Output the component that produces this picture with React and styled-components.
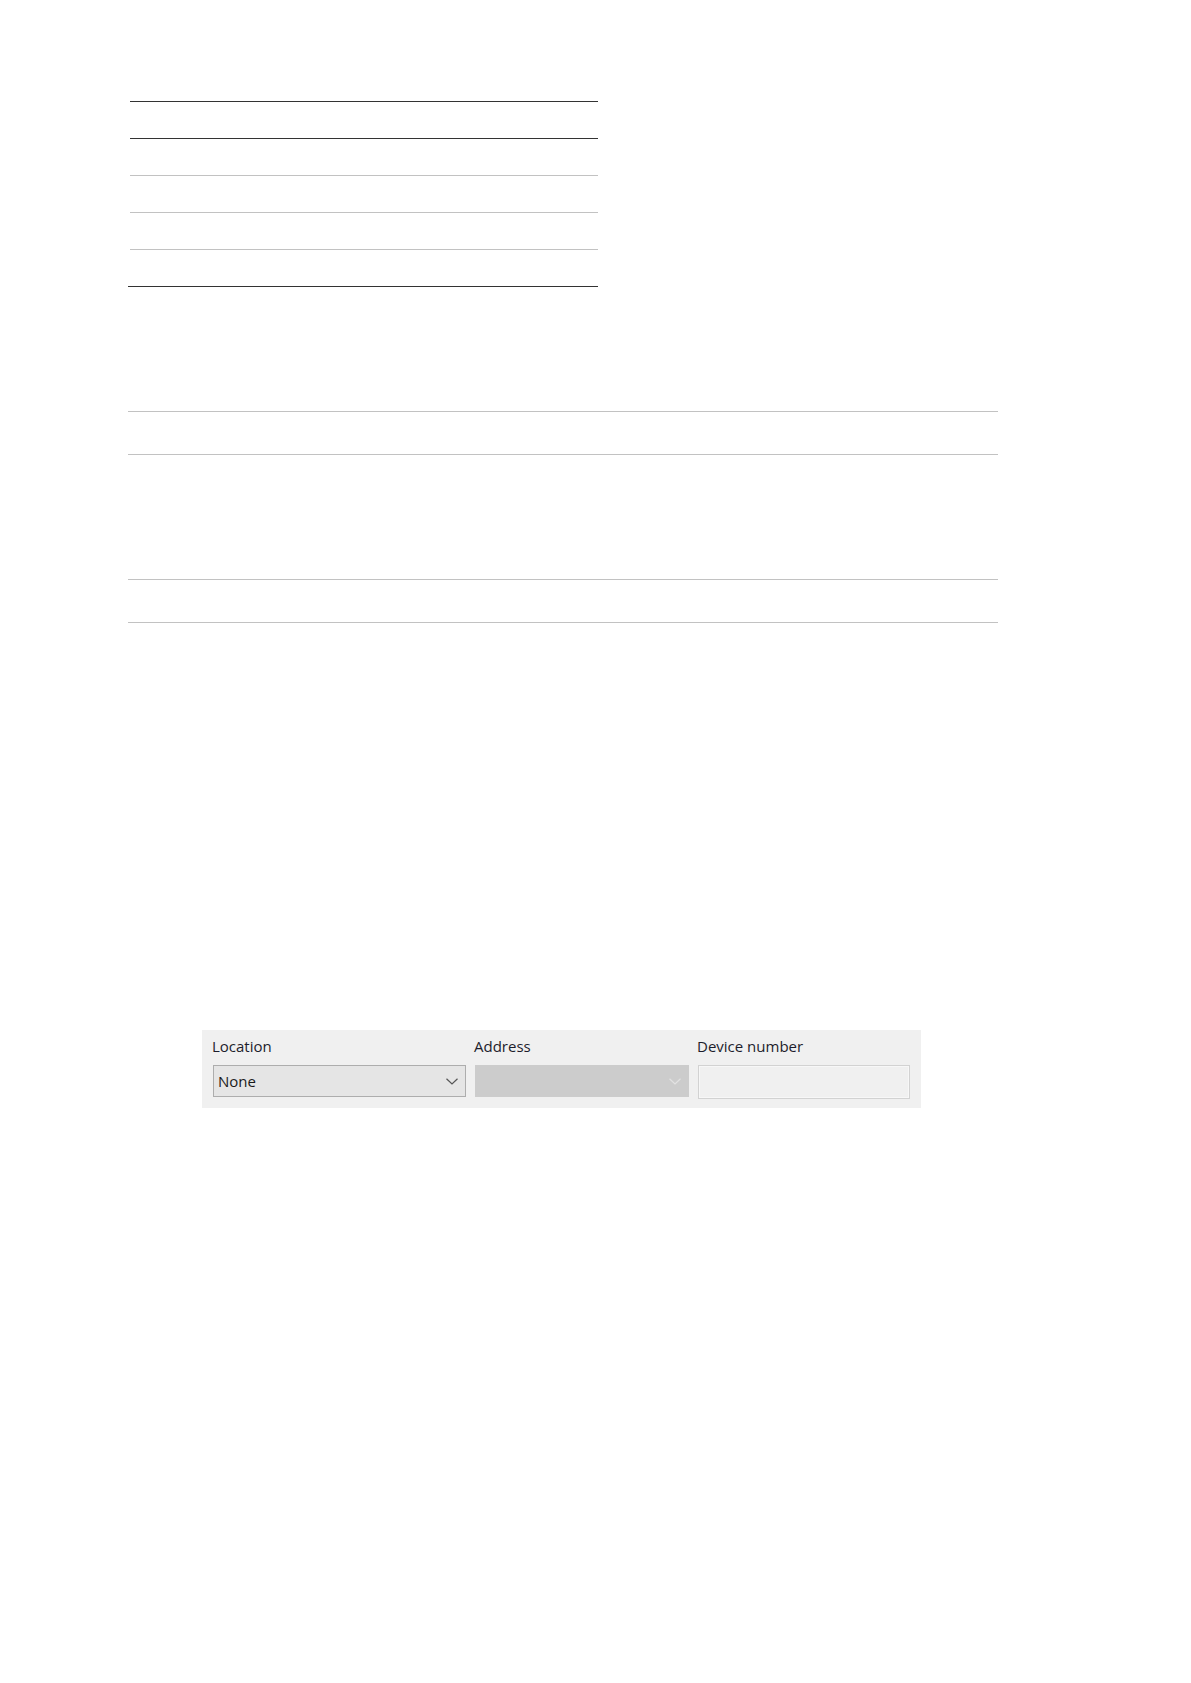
import React from 'react';
import styled, { createGlobalStyle } from 'styled-components';

const GlobalStyle = createGlobalStyle`
  html, body {
    margin: 0;
    padding: 0;
    background: #fff;
  }
  body {
    font-family: "Open Sans", "Noto Sans", sans-serif;
    color: #1c1c24;
  }
`;

const Page = styled.main`
  display: flex;
  flex-direction: column;
  align-items: flex-start;
  min-height: 1683px;
  padding-top: 101px;
  box-sizing: border-box;
`;

const RuledTable = styled.div`
  width: 468px;
  margin-left: 130px;
  border-top: 1px solid #333;
`;

const TableRow = styled.div`
  height: 37px;
  box-sizing: border-box;
  border-bottom: 1px solid ${p => (p.$dark ? '#333' : '#c2c2c2')};
  margin-left: ${p => (p.$wide ? '-2px' : '0')};
`;

const FieldBlock = styled.div`
  width: 870px;
  margin-left: 128px;
  margin-top: ${p => p.$top}px;
  height: 44px;
  box-sizing: border-box;
  border-top: 1px solid #c2c2c2;
  border-bottom: 1px solid #c2c2c2;
`;

const Panel = styled.section`
  margin-top: 407px;
  margin-left: 202px;
  width: 719px;
  box-sizing: border-box;
  padding: 6px 11px 9px 11px;
  background: #f0f0f0;
  display: grid;
  grid-template-columns: 253px 214px 212px;
  column-gap: 9px;
`;

const Field = styled.div`
  display: flex;
  flex-direction: column;
  gap: 9px;
`;

const Label = styled.label`
  font-size: 15px;
  line-height: 20px;
  color: #1d1d2c;
  margin-left: -1px;
`;

const Select = styled.div`
  height: 32px;
  box-sizing: border-box;
  display: flex;
  align-items: center;
  justify-content: space-between;
  padding: 0 7px 0 4px;
  font-size: 15px;
  color: #1a1a1a;
  background: ${p => (p.$disabled ? '#cccccc' : '#e5e5e5')};
  border: 1px solid ${p => (p.$disabled ? '#cccccc' : '#adadad')};
`;

const TextBox = styled.div`
  height: 34px;
  box-sizing: border-box;
  background: #f0f0f0;
  border: 1px solid #d2d2d2;
  box-shadow: inset 0 0 0 1px #f7f7f7;
`;

const Chevron = ({ color }) => (
  <svg width="12" height="7" viewBox="0 0 12 7">
    <polyline points="0.5,0.8 6,6 11.5,0.8" fill="none" stroke={color} strokeWidth="1.2" />
  </svg>
);

export default function App() {
  return (
    <>
      <GlobalStyle />
      <Page>
        <RuledTable>
          <TableRow $dark />
          <TableRow />
          <TableRow />
          <TableRow />
          <TableRow $dark $wide />
        </RuledTable>

        <FieldBlock $top={124} />
        <FieldBlock $top={124} />

        <Panel>
          <Field>
            <Label>Location</Label>
            <Select>
              <span>None</span>
              <Chevron color="#555" />
            </Select>
          </Field>
          <Field>
            <Label>Address</Label>
            <Select $disabled>
              <span />
              <Chevron color="#e2e2e2" />
            </Select>
          </Field>
          <Field>
            <Label>Device number</Label>
            <TextBox />
          </Field>
        </Panel>
      </Page>
    </>
  );
}
